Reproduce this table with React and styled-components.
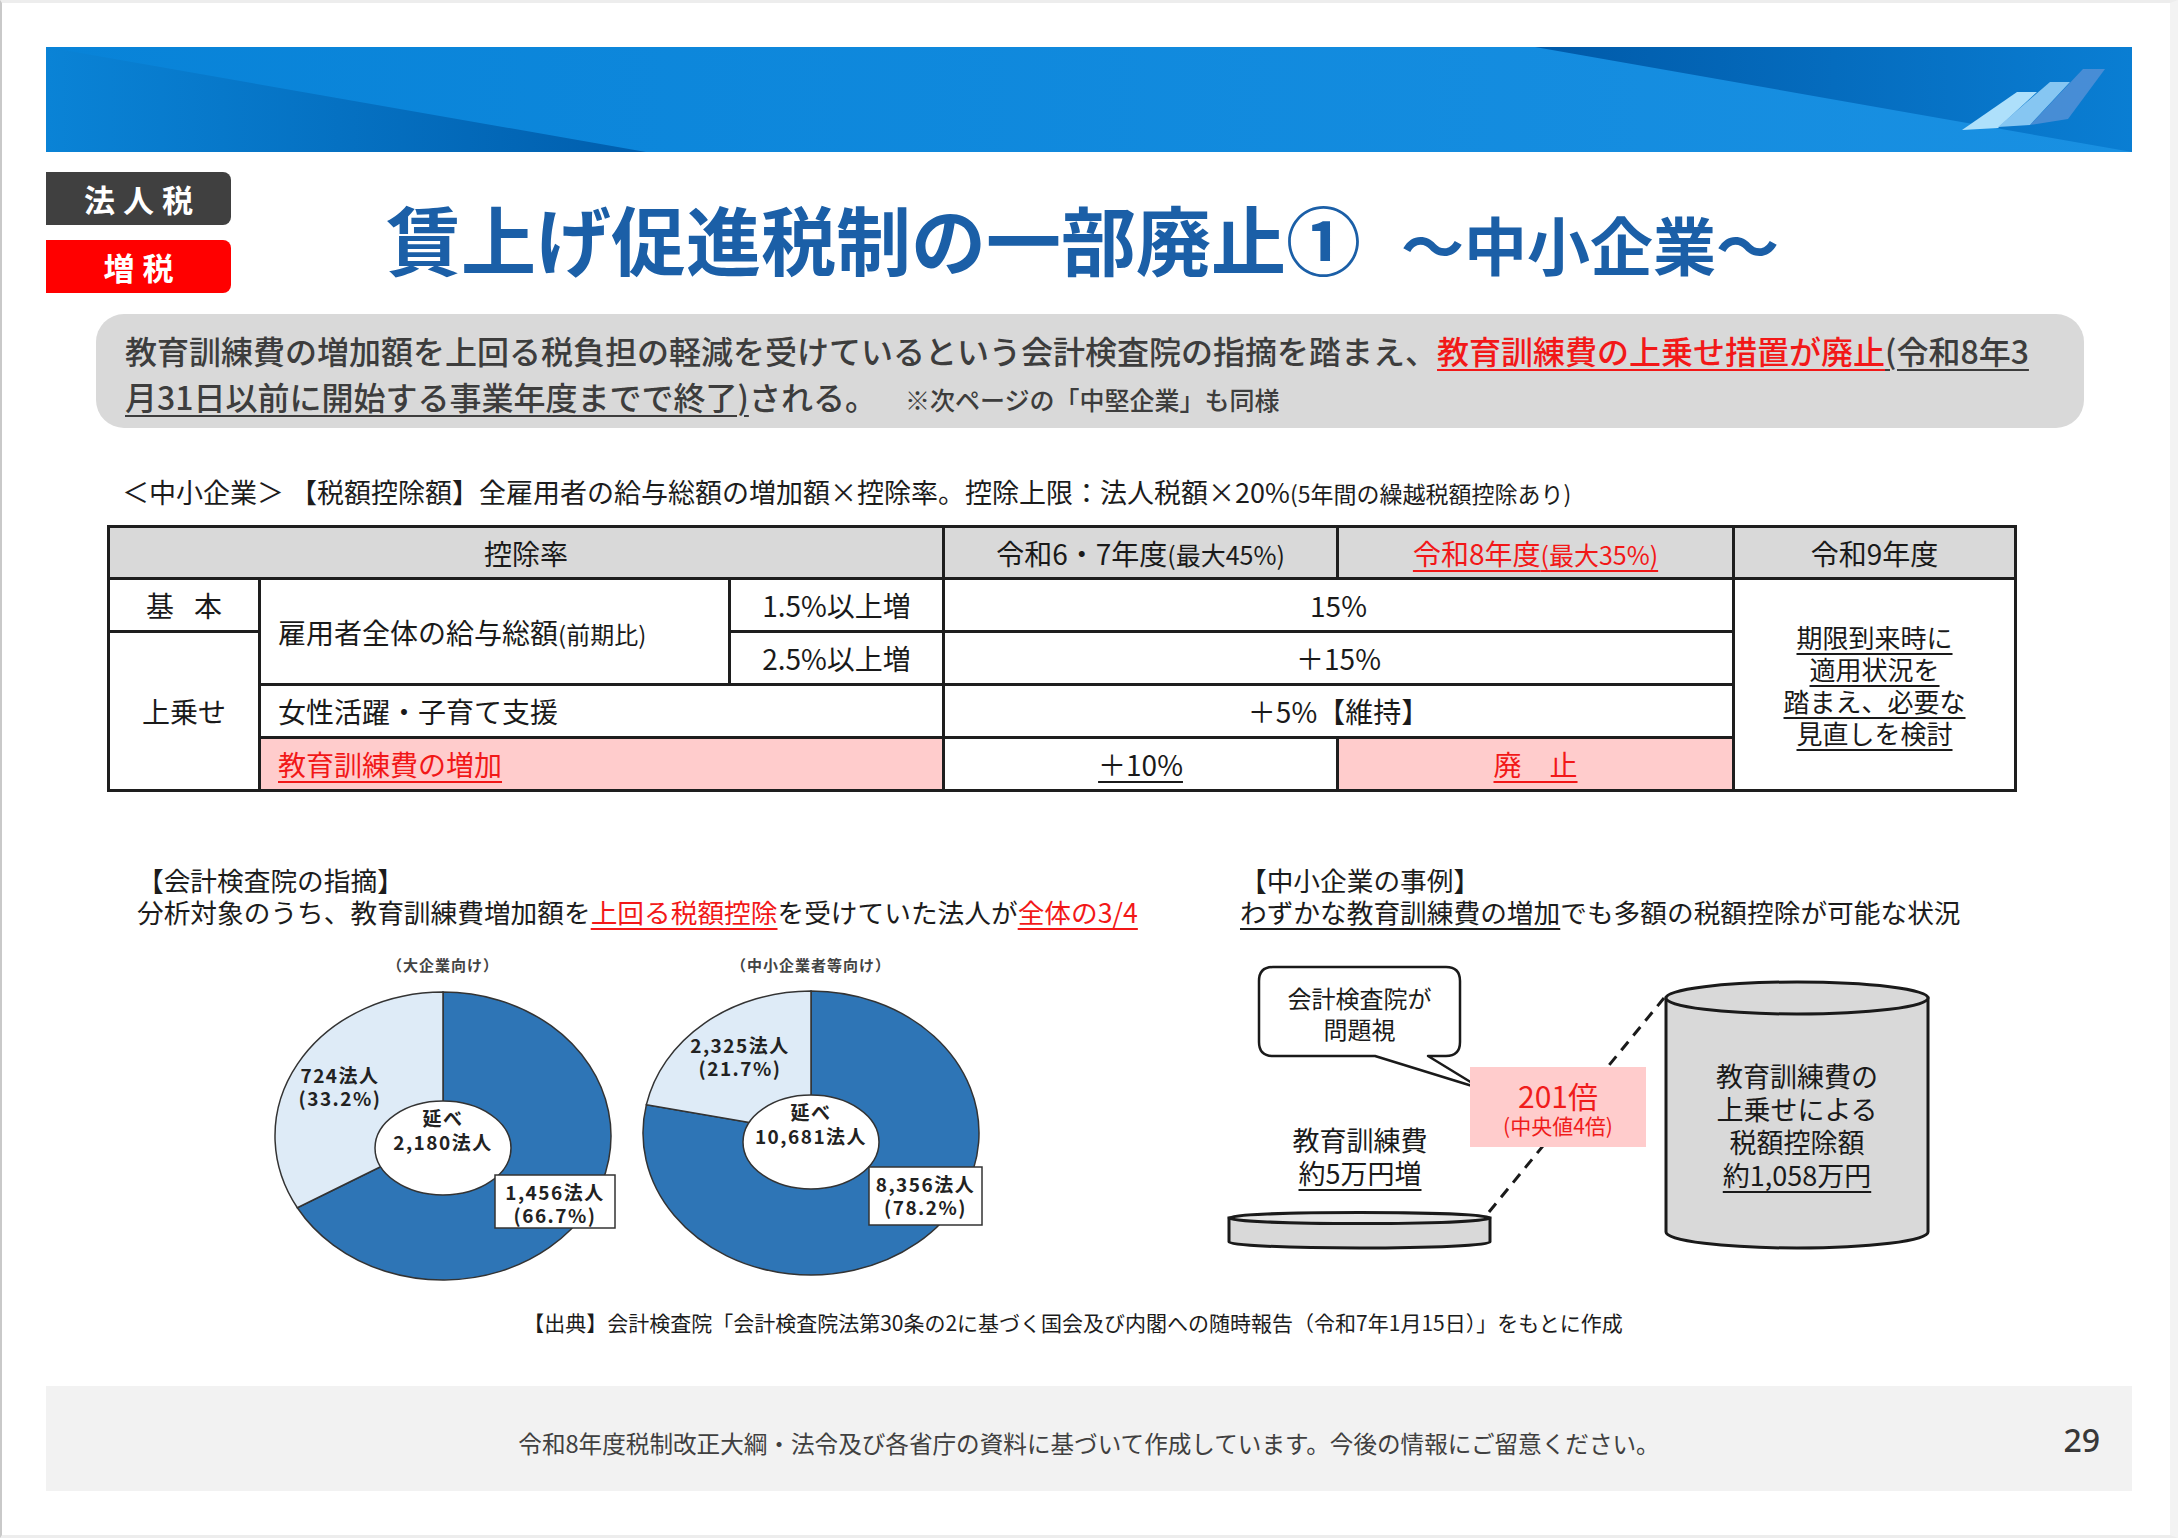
import React from 'react';
import styled, { createGlobalStyle } from 'styled-components';

const GlobalStyle = createGlobalStyle`
  html, body {
    margin: 0;
    padding: 0;
    background: #fff;
  }
  body {
    font-family: "Noto Sans CJK JP", "Noto Sans", sans-serif;
    color: #1c1c1c;
  }
  * {
    box-sizing: border-box;
  }
`;

const Page = styled.div`
  width: 2178px;
  height: 1538px;
  border-top: 3px solid #ededed;
  border-left: 2px solid #c9c9c9;
  border-right: 8px solid #f3f3f3;
  border-bottom: 3px solid #ededed;
  padding: 44px 38px 0 44px;
  display: flex;
  flex-direction: column;
  overflow: hidden;
  background: #fff;
`;

const Banner = styled.div`
  position: relative;
  height: 105px;
  flex: none;
  background: #0883d8;
  overflow: hidden;
`;

const BannerSvg = styled.svg`
  position: absolute;
  inset: 0;
  width: 100%;
  height: 100%;
`;

const HeaderRow = styled.div`
  display: flex;
  align-items: center;
  height: 121px;
  margin-top: 20px;
  flex: none;
`;

const Badges = styled.div`
  display: flex;
  flex-direction: column;
  gap: 15px;
  width: 185px;
`;

const Badge = styled.div`
  height: 53px;
  background: ${props => props.$bg};
  color: #fff;
  border-radius: 0 8px 8px 0;
  display: flex;
  align-items: center;
  justify-content: center;
  font-size: 31px;
  font-weight: 700;
  letter-spacing: 8px;
  padding-left: 8px;
`;

const Title = styled.h1`
  margin: 10px 0 0 155px;
  font-size: 75px;
  line-height: 1;
  font-weight: 700;
  color: #1b5fa7;
  white-space: nowrap;
`;

const TitleSub = styled.span`
  font-size: 63px;
  margin-left: 40px;
`;

const InfoBox = styled.div`
  margin: 21px 48px 0 50px;
  height: 114px;
  flex: none;
  background: #d9d9d9;
  border-radius: 28px;
  padding: 13px 0 0 29px;
  font-size: 32px;
  line-height: 46px;
  font-weight: 500;
  color: #3d3d3d;
  white-space: nowrap;
`;

const U = styled.span`
  text-decoration: underline;
  text-decoration-thickness: 2px;
  text-underline-offset: 5px;
`;

const RedU = styled(U)`
  color: #f21818;
`;

const Note = styled.span`
  font-size: 25px;
  margin-left: 28px;
`;

const Caption = styled.div`
  margin: 47px 0 0 76px;
  font-size: 27px;
  line-height: 34px;
  white-space: nowrap;
  flex: none;
`;

const Smaller = styled.span`
  font-size: ${props => props.$size || 23}px;
`;

const RateTable = styled.table`
  margin: 15px 0 0 61px;
  width: 1907px;
  flex: none;
  border-collapse: collapse;
  table-layout: fixed;
  font-size: 28px;
  color: #1a1a1a;
`;

const Col = styled.col`
  width: ${props => props.$w}px;
`;

const Row = styled.tr`
  height: ${props => props.$h}px;
`;

const Th = styled.th`
  border: 3px solid #1e1e1e;
  background: #d9d9d9;
  font-weight: 400;
  text-align: center;
  padding: 0;
  white-space: nowrap;
`;

const Td = styled.td`
  border: 3px solid #1e1e1e;
  background: ${props => (props.$pink ? '#ffcccc' : '#fff')};
  text-align: ${props => (props.$center ? 'center' : 'left')};
  padding: ${props => (props.$center ? '0' : '0 0 0 17px')};
  white-space: nowrap;
`;

const Spaced = styled.span`
  letter-spacing: 20px;
  padding-left: 20px;
`;

const Review = styled.div`
  font-size: 26px;
  line-height: 32px;
`;

const LowerRow = styled.div`
  display: flex;
  height: 433px;
  margin-top: 72px;
  flex: none;
`;

const LeftCol = styled.div`
  margin-left: 91px;
  width: 1083px;
  display: flex;
  flex-direction: column;
`;

const RightCol = styled.div`
  flex: 1;
  display: flex;
  flex-direction: column;
`;

const Heading = styled.div`
  font-size: 26.7px;
  line-height: 32px;
  white-space: nowrap;
  padding-left: ${props => props.$indent || 0}px;
`;

const ChartArea = styled.svg`
  margin-top: 24px;
  width: 900px;
  height: 345px;
  font-family: "Noto Sans CJK JP", sans-serif;
`;

const Diagram = styled.div`
  position: relative;
  margin-top: 26px;
  width: 740px;
  height: 300px;
`;

const DiagramSvg = styled.svg`
  position: absolute;
  inset: 0;
  width: 100%;
  height: 100%;
`;

const DiagramLabel = styled.div`
  position: absolute;
  left: ${props => props.$x}px;
  top: ${props => props.$y}px;
  width: ${props => props.$w}px;
  text-align: center;
  font-size: ${props => props.$size}px;
  line-height: ${props => props.$lh}px;
  color: #1a1a1a;
  white-space: nowrap;
`;

const Multiplier = styled.div`
  position: absolute;
  left: 250px;
  top: 113px;
  width: 176px;
  height: 80px;
  background: #ffcccc;
  color: #f01c1c;
  text-align: center;
  padding-top: 11px;
`;

const MultBig = styled.div`
  font-size: 30px;
  line-height: 34px;
`;

const MultSmall = styled.div`
  font-size: 21px;
  line-height: 26px;
`;

const Source = styled.div`
  margin-top: 12px;
  font-size: 21px;
  line-height: 26px;
  text-align: center;
  padding-right: 32px;
  white-space: nowrap;
  flex: none;
`;

const Footer = styled.div`
  margin-top: 51px;
  height: 105px;
  flex: none;
  background: #f2f2f2;
  display: grid;
  grid-template-columns: 1fr auto 1fr;
  align-items: center;
  padding-top: 8px;
`;

const FooterText = styled.div`
  grid-column: 2;
  font-size: 23.6px;
  color: #404040;
  white-space: nowrap;
`;

const PageNo = styled.div`
  grid-column: 3;
  justify-self: end;
  padding-right: 32px;
  margin-top: -6px;
  font-family: "Noto Sans", "Open Sans", sans-serif;
  font-size: 32px;
  font-weight: 500;
  color: #383838;
`;

function BannerArt() {
  return (
    <BannerSvg viewBox="0 0 2086 105" preserveAspectRatio="none">
      <defs>
        <linearGradient id="leftWedge" x1="0" x2="1" y1="0" y2="0">
          <stop offset="0" stopColor="#0a83d6" />
          <stop offset="1" stopColor="#005ead" />
        </linearGradient>
        <linearGradient id="rightWedge" x1="0" x2="1" y1="0" y2="0">
          <stop offset="0" stopColor="#005aa9" />
          <stop offset="1" stopColor="#0a7ed3" />
        </linearGradient>
        <linearGradient id="bottomGlow" x1="0" x2="1" y1="0" y2="0">
          <stop offset="0" stopColor="#0883d8" />
          <stop offset="1" stopColor="#1990e2" />
        </linearGradient>
      </defs>
      <rect x="0" y="0" width="2086" height="105" fill="url(#bottomGlow)" />
      <polygon points="0,0 600,105 0,105" fill="url(#leftWedge)" />
      <polygon points="1489,0 2086,0 2086,105" fill="url(#rightWedge)" />
      <polygon points="1916,83 1971,45 1991,45 1952,81" fill="#aee0fb" />
      <polygon points="1952,80 2004,35 2024,35 1984,78" fill="#86c6f2" />
      <polygon points="1984,78 2037,22 2059,22 2022,72" fill="#4f8fd6" opacity="0.9" />
    </BannerSvg>
  );
}

function slices(cx, cy, rx, ry, frac) {
  const a = frac * Math.PI * 2;
  const px = cx + rx * Math.sin(a);
  const py = cy - ry * Math.cos(a);
  const large = frac > 0.5 ? 1 : 0;
  return {
    dark: `M${cx},${cy} L${cx},${cy - ry} A${rx},${ry} 0 ${large} 1 ${px},${py} Z`,
    light: `M${cx},${cy} L${px},${py} A${rx},${ry} 0 ${1 - large} 1 ${cx},${cy - ry} Z`,
  };
}

const pieText = { fontWeight: 700, fill: '#222', textAnchor: 'middle', letterSpacing: 1.5 };

function Donut({ cx, cy, rx, ry, frac, holeY, title, light, total, dark, box }) {
  const s = slices(cx, cy, rx, ry, frac);
  return (
    <g>
      <text x={cx} y={19} fontSize="15" fill="#444" fontWeight="700" textAnchor="middle" letterSpacing="1">{title}</text>
      <path d={s.dark} fill="#2e75b6" stroke="#333" strokeWidth="1.5" />
      <path d={s.light} fill="#deebf7" stroke="#333" strokeWidth="1.5" />
      <ellipse cx={cx} cy={holeY} rx="68" ry="47" fill="#fff" stroke="#333" strokeWidth="1.5" />
      <text x={light.x} y={light.y} fontSize="19" {...pieText}>{light.lines[0]}</text>
      <text x={light.x} y={light.y + 23} fontSize="19" {...pieText}>{light.lines[1]}</text>
      <text x={cx} y={holeY - 22} fontSize="19" {...pieText}>延べ</text>
      <text x={cx} y={holeY + 2} fontSize="19" {...pieText}>{total}</text>
      <rect x={box.x} y={box.y} width={box.w} height={box.h} fill="#fff" stroke="#333" strokeWidth="1.5" />
      <text x={box.x + box.w / 2} y={box.y + 25} fontSize="19" {...pieText}>{dark[0]}</text>
      <text x={box.x + box.w / 2} y={box.y + 48} fontSize="19" {...pieText}>{dark[1]}</text>
    </g>
  );
}

function Charts() {
  return (
    <ChartArea viewBox="0 0 900 345">
      <Donut
        cx={306} cy={184} rx={168} ry={144} frac={0.667} holeY={196}
        title="（大企業向け）"
        light={{ x: 203, y: 131, lines: ['724法人', '(33.2%)'] }}
        total="2,180法人"
        dark={['1,456法人', '(66.7%)']}
        box={{ x: 358, y: 223, w: 120, h: 53 }}
      />
      <Donut
        cx={674} cy={181} rx={168} ry={142} frac={0.782} holeY={190}
        title="（中小企業者等向け）"
        light={{ x: 603, y: 101, lines: ['2,325法人', '(21.7%)'] }}
        total="10,681法人"
        dark={['8,356法人', '(78.2%)']}
        box={{ x: 732, y: 215, w: 113, h: 58 }}
      />
    </ChartArea>
  );
}

function CaseDiagram() {
  return (
    <Diagram>
      <DiagramSvg viewBox="0 0 740 300">
        <path
          d="M53,13 H226 Q240,13 240,27 V88 Q240,102 226,102 H208 L262,135 L155,102 H53 Q39,102 39,88 V27 Q39,13 53,13 Z"
          fill="#fff"
          stroke="#1a1a1a"
          strokeWidth="2.5"
          strokeLinejoin="round"
        />
        <line x1="269" y1="258" x2="444" y2="44" stroke="#1a1a1a" strokeWidth="3" strokeDasharray="11 8" />
        <path d="M9,264 V288 A130.5,6 0 0 0 270,288 V264 Z" fill="#d9d9d9" stroke="#1a1a1a" strokeWidth="3" />
        <ellipse cx="139.5" cy="264" rx="130.5" ry="5.5" fill="#e6e6e6" stroke="#1a1a1a" strokeWidth="3" />
        <path d="M446,44 V278 A131,16 0 0 0 708,278 V44 Z" fill="#d9d9d9" stroke="#1a1a1a" strokeWidth="3" />
        <ellipse cx="577" cy="44" rx="131" ry="16" fill="#d9d9d9" stroke="#1a1a1a" strokeWidth="3" />
      </DiagramSvg>
      <DiagramLabel $x={39} $y={28} $w={201} $size={24} $lh={31}>
        会計検査院が<br />問題視
      </DiagramLabel>
      <Multiplier>
        <MultBig>201倍</MultBig>
        <MultSmall>(中央値4倍)</MultSmall>
      </Multiplier>
      <DiagramLabel $x={40} $y={169} $w={200} $size={27} $lh={33}>
        教育訓練費<br /><U>約5万円増</U>
      </DiagramLabel>
      <DiagramLabel $x={446} $y={105} $w={262} $size={27} $lh={33}>
        教育訓練費の<br />上乗せによる<br />税額控除額<br /><U>約1,058万円</U>
      </DiagramLabel>
    </Diagram>
  );
}

export default function App() {
  return (
    <>
      <GlobalStyle />
      <Page>
        <Banner>
          <BannerArt />
        </Banner>

        <HeaderRow>
          <Badges>
            <Badge $bg="#404040">法人税</Badge>
            <Badge $bg="#ff0000">増税</Badge>
          </Badges>
          <Title>
            賃上げ促進税制の一部廃止①<TitleSub>～中小企業～</TitleSub>
          </Title>
        </HeaderRow>

        <InfoBox>
          教育訓練費の増加額を上回る税負担の軽減を受けているという会計検査院の指摘を踏まえ、
          <RedU>教育訓練費の上乗せ措置が廃止</RedU>
          <U>(令和8年3</U>
          <br />
          <U>月31日以前に開始する事業年度までで終了)</U>される。
          <Note>※次ページの「中堅企業」も同様</Note>
        </InfoBox>

        <Caption>
          ＜中小企業＞ 【税額控除額】全雇用者の給与総額の増加額×控除率。控除上限：法人税額×20%
          <Smaller $size={23}>(5年間の繰越税額控除あり)</Smaller>
        </Caption>

        <RateTable>
          <colgroup>
            <Col $w={151} />
            <Col $w={470} />
            <Col $w={214} />
            <Col $w={394} />
            <Col $w={396} />
            <Col $w={282} />
          </colgroup>
          <thead>
            <Row $h={52}>
              <Th colSpan={3}>控除率</Th>
              <Th>令和6・7年度<Smaller $size={25}>(最大45%)</Smaller></Th>
              <Th><RedU>令和8年度<Smaller $size={25}>(最大35%)</Smaller></RedU></Th>
              <Th>令和9年度</Th>
            </Row>
          </thead>
          <tbody>
            <Row $h={53}>
              <Td $center><Spaced>基本</Spaced></Td>
              <Td rowSpan={2}>雇用者全体の給与総額<Smaller $size={24}>(前期比)</Smaller></Td>
              <Td $center>1.5%以上増</Td>
              <Td $center colSpan={2}>15%</Td>
              <Td $center rowSpan={4}>
                <Review>
                  <U>期限到来時に<br />適用状況を<br />踏まえ、必要な<br />見直しを検討</U>
                </Review>
              </Td>
            </Row>
            <Row $h={53}>
              <Td $center rowSpan={3}>上乗せ</Td>
              <Td $center>2.5%以上増</Td>
              <Td $center colSpan={2}>＋15%</Td>
            </Row>
            <Row $h={53}>
              <Td colSpan={2}>女性活躍・子育て支援</Td>
              <Td $center colSpan={2}>＋5%【維持】</Td>
            </Row>
            <Row $h={53}>
              <Td colSpan={2} $pink><RedU>教育訓練費の増加</RedU></Td>
              <Td $center><U>＋10%</U></Td>
              <Td $center $pink><RedU>廃　止</RedU></Td>
            </Row>
          </tbody>
        </RateTable>

        <LowerRow>
          <LeftCol>
            <Heading>【会計検査院の指摘】</Heading>
            <Heading>
              分析対象のうち、教育訓練費増加額を<RedU>上回る税額控除</RedU>を受けていた法人が<RedU>全体の3/4</RedU>
            </Heading>
            <Charts />
          </LeftCol>
          <RightCol>
            <Heading $indent={20}>【中小企業の事例】</Heading>
            <Heading $indent={20}>
              <U>わずかな教育訓練費の増加</U>でも多額の税額控除が可能な状況
            </Heading>
            <CaseDiagram />
          </RightCol>
        </LowerRow>

        <Source>
          【出典】会計検査院「会計検査院法第30条の2に基づく国会及び内閣への随時報告（令和7年1月15日）」をもとに作成
        </Source>

        <Footer>
          <FooterText>令和8年度税制改正大綱・法令及び各省庁の資料に基づいて作成しています。今後の情報にご留意ください。</FooterText>
          <PageNo>29</PageNo>
        </Footer>
      </Page>
    </>
  );
}
